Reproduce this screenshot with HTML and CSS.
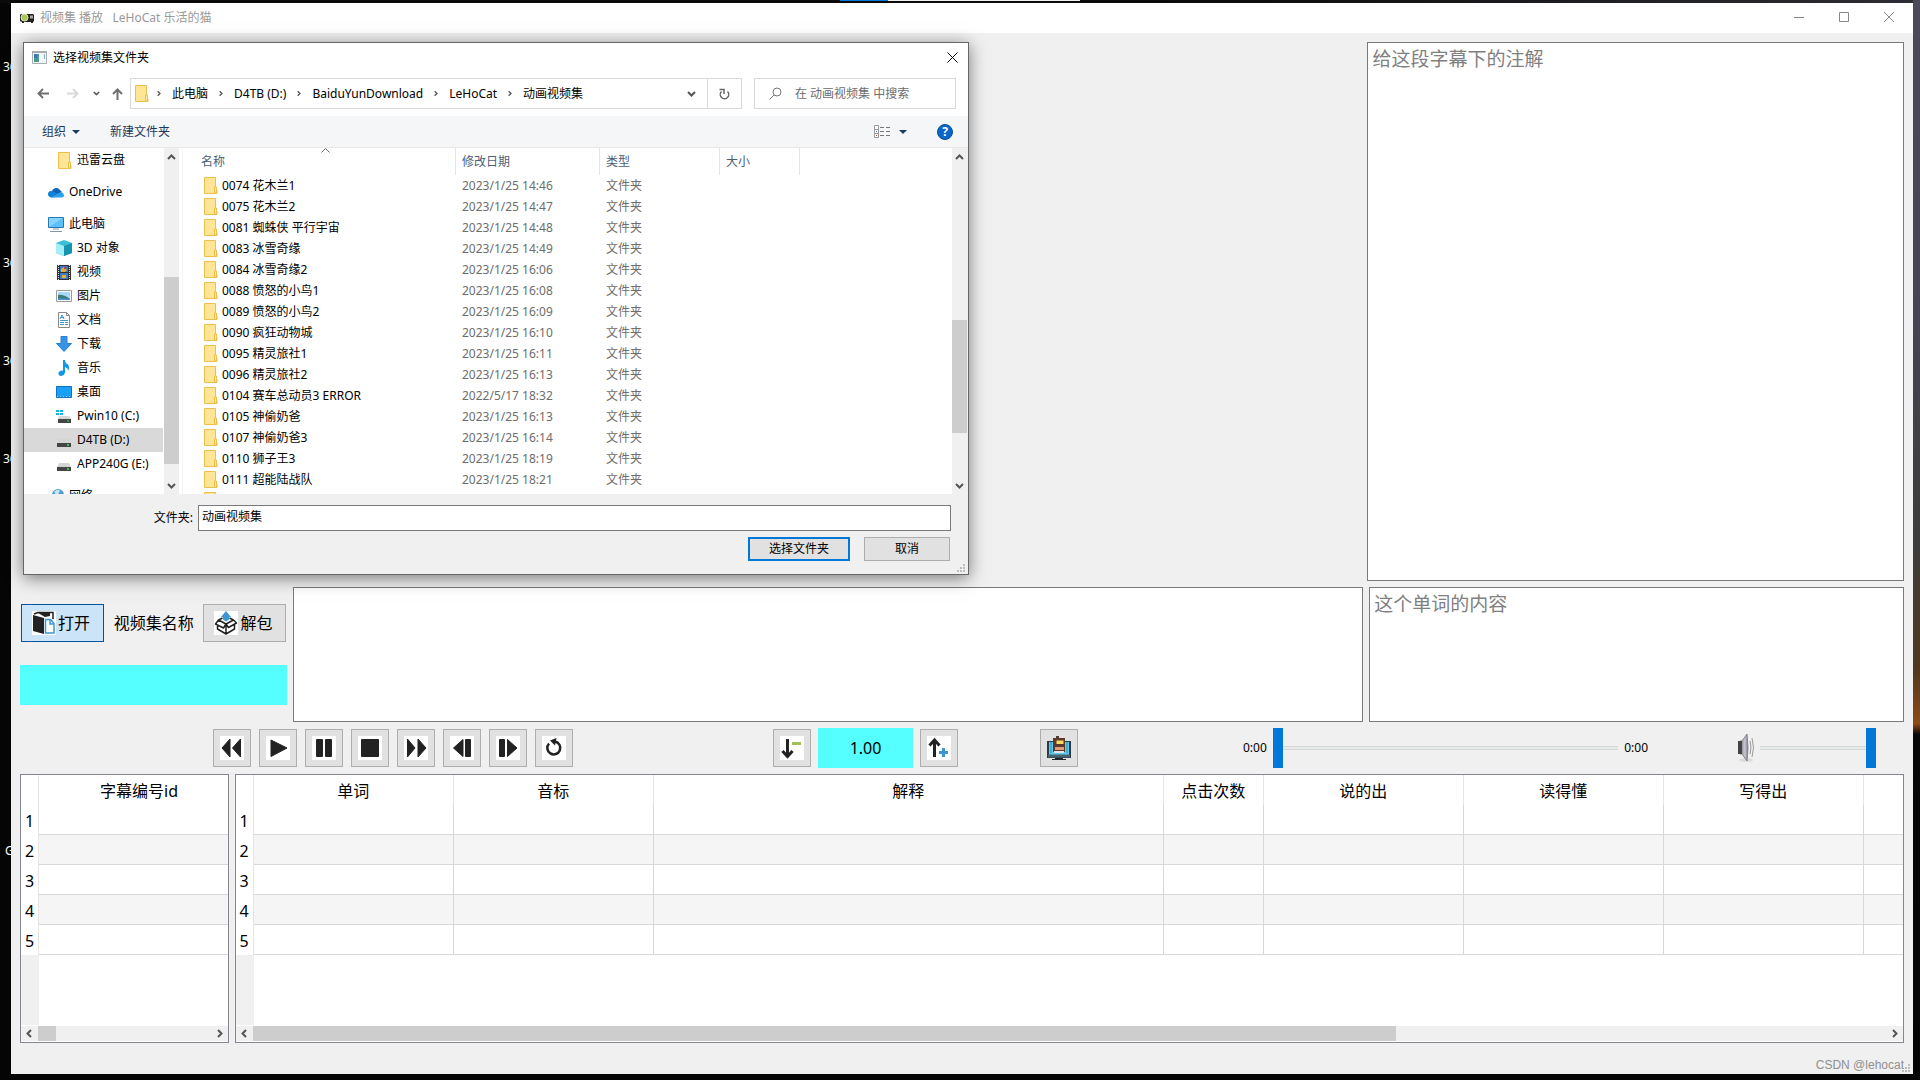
FILE: index.html
```html
<!DOCTYPE html>
<html lang="zh-CN">
<head>
<meta charset="utf-8">
<title>视频集 播放 LeHoCat 乐活的猫</title>
<link rel="stylesheet" href="styles.css">
</head>
<body>
<svg class="defs" aria-hidden="true">
  <symbol id="folder" viewBox="0 0 14 17">
    <path d="M.5.5h11v13h1.5v3H.5z" fill="#ffe595" stroke="#ecc04a"/>
    <path d="M10.500 16v-6h2v6z" fill="#ffe9a3" stroke="#ecc04a"/>
  </symbol>
  <symbol id="drive" viewBox="0 0 16 16">
    <path d="M3 7h10l2 4H1z" fill="#d5d5d5"/>
    <path d="M1 11h14v4H1z" fill="#454545"/>
    <path d="M11 13h2" stroke="#4be04b" stroke-width="1.500"/>
  </symbol>
  <symbol id="up" viewBox="0 0 9 6"><path d="M1 5l3.500-3.500L8 5" fill="none" stroke="#555" stroke-width="2"/></symbol>
  <symbol id="down" viewBox="0 0 9 6"><path d="M1 1l3.500 3.500L8 1" fill="none" stroke="#555" stroke-width="2"/></symbol>
  <symbol id="left" viewBox="0 0 6 9"><path d="M5 1L1.500 4.500 5 8" fill="none" stroke="#555" stroke-width="2"/></symbol>
  <symbol id="right" viewBox="0 0 6 9"><path d="M1 1l3.500 3.500L1 8" fill="none" stroke="#555" stroke-width="2"/></symbol>
  <symbol id="grip" viewBox="0 0 8 8"><path d="M6 0h2v2H6zM3 3h2v2H3zM6 3h2v2H6zM0 6h2v2H0zM3 6h2v2H3zM6 6h2v2H6z" fill="#bdbdbd"/></symbol>
</svg>

<div class="desktop">
  <span class="taskbar-edge"></span>
  <span class="desk-label one">36</span>
  <span class="desk-label two">36</span>
  <span class="desk-label three">36</span>
  <span class="desk-label four">36</span>
  <span class="desk-label five">G</span>

  <div class="window">
    <header class="titlebar">
      <svg width="14" height="10" viewBox="0 0 14 10"><path d="M0 1.500L2 1h11l1 1v6l-1 1v1h-2V9H4v1H2V9L0 8z" fill="#222"/><circle cx="4.500" cy="4.500" r="3.500" fill="#a6c957" stroke="#dfe6c9"/><path d="M10 2.500h3v3h-3z" fill="#aaa"/></svg>
      <h1>视频集 播放&nbsp;&nbsp; LeHoCat 乐活的猫</h1>
      <div class="window-buttons">
        <button aria-label="最小化"><svg width="10" height="10"><path d="M0 5.500h10" stroke="#888"/></svg></button>
        <button aria-label="最大化"><svg width="10" height="10"><path d="M.5.5h9v9h-9z" fill="none" stroke="#888"/></svg></button>
        <button aria-label="关闭"><svg width="10" height="10"><path d="M0 0l10 10M10 0L0 10" stroke="#888"/></svg></button>
      </div>
    </header>

    <main>
      <section class="upper">
        <textarea class="note" aria-label="注解" placeholder="给这段字幕下的注解"></textarea>
      </section>

      <section class="middle">
        <div class="package">
          <div class="package-row">
            <button class="push push-text active">
              <svg width="24" height="24" viewBox="0 0 24 24"><path fill="#fff" d="M0 0h24v24H0z"/><path d="M1 4l11 3v16L1 20z" fill="#222"/><path d="M2 3l4-1.500h15V8" fill="none" stroke="#222" stroke-width="1.500"/><path d="M6 2h12v3l-5 1z" fill="#222"/><path d="M13.500 8.500h5l3.500 4v9.500h-8.500z" fill="#fff" stroke="#3b97d3" stroke-width="1.500"/><path d="M18 9v4h4" fill="none" stroke="#3b97d3" stroke-width="1.500"/></svg>打开</button>
            <span>视频集名称</span>
            <button class="push push-text">
              <svg width="24" height="24" viewBox="0 0 24 24"><path fill="#fff" d="M0 0h24v24H0z"/><path d="M3.500 13.500V18l8.500 5 8.500-5v-4.500M12 13.500V23M4.500 9L12 13l-2.500 4L1.500 13zM19.500 9L12 13l2.500 3.500 8-4.500zM4.500 9l4-2M19.500 9l-4-2" fill="none" stroke="#222" stroke-width="1.500" stroke-linejoin="round"/><path d="M12 0l5 6h-2v2.500l-3 2-3-2V6H7z" fill="#3b97d3"/></svg>解包</button>
          </div>
          <output class="package-name"></output>
        </div>
        <textarea aria-label="字幕"></textarea>
        <textarea aria-label="单词内容" placeholder="这个单词的内容"></textarea>
      </section>

      <section class="controls">
        <div class="playback">
          <button class="push" aria-label="快退"><svg width="24" height="24" viewBox="0 0 24 24"><path fill="#fff" d="M0 0h24v24H0z"/><path d="M10 3v18L2 12zM20.500 3v18L12.500 12z" fill="#222" stroke="#222" stroke-linejoin="round"/></svg></button>
          <button class="push" aria-label="播放"><svg width="24" height="24" viewBox="0 0 24 24"><path fill="#fff" d="M0 0h24v24H0z"/><path d="M5 4l16 8-16 8.500z" fill="#222" stroke="#222" stroke-linejoin="round"/></svg></button>
          <button class="push" aria-label="暂停"><svg width="24" height="24" viewBox="0 0 24 24"><path fill="#fff" d="M0 0h24v24H0z"/><rect x="4" y="3" width="7" height="18" rx="1" fill="#222"/><rect x="13" y="3" width="7" height="18" rx="1" fill="#222"/></svg></button>
          <button class="push" aria-label="停止"><svg width="24" height="24" viewBox="0 0 24 24"><path fill="#fff" d="M0 0h24v24H0z"/><rect x="3" y="3" width="18" height="18" rx="1" fill="#222"/></svg></button>
          <button class="push" aria-label="快进"><svg width="24" height="24" viewBox="0 0 24 24"><path fill="#fff" d="M0 0h24v24H0z"/><path d="M3.500 3v18L11 12zM14 3v18L22 12z" fill="#222" stroke="#222" stroke-linejoin="round"/></svg></button>
          <button class="push" aria-label="上一句"><svg width="24" height="24" viewBox="0 0 24 24"><path fill="#fff" d="M0 0h24v24H0z"/><path d="M13 3.500v17L3.500 12z" fill="#222" stroke="#222" stroke-linejoin="round"/><rect x="15" y="3" width="6" height="18" rx="1" fill="#222"/></svg></button>
          <button class="push" aria-label="下一句"><svg width="24" height="24" viewBox="0 0 24 24"><path fill="#fff" d="M0 0h24v24H0z"/><path d="M11.500 3.500v17L21 12z" fill="#222" stroke="#222" stroke-linejoin="round"/><rect x="3" y="3" width="6" height="18" rx="1" fill="#222"/></svg></button>
          <button class="push" aria-label="重播"><svg width="24" height="24" viewBox="0 0 24 24"><path fill="#fff" d="M0 0h24v24H0z"/><path d="M7 7.500a6.500 6.500 0 1 0 6-2" fill="none" stroke="#222" stroke-width="2.500"/><path d="M14.500 2L8 4.500l5 5z" fill="#222"/></svg></button>
        </div>
        <div class="speed">
          <button class="push" aria-label="减速"><svg width="24" height="24" viewBox="0 0 24 24"><path fill="#fff" d="M0 0h24v24H0z"/><path d="M7.500 3v18M2.500 15l5 5.500 5-5.500" fill="none" stroke="#222" stroke-width="3"/><path d="M12 6h9v3h-9z" fill="#a2c058"/></svg></button>
          <output>1.00</output>
          <button class="push" aria-label="加速"><svg width="24" height="24" viewBox="0 0 24 24"><path fill="#fff" d="M0 0h24v24H0z"/><path d="M7.500 21V4M2.500 9.500l5-5.500 5 5.500" fill="none" stroke="#222" stroke-width="3"/><path d="M12 16.500h9M16.500 12v9" stroke="#3b97d3" stroke-width="3"/></svg></button>
        </div>
        <button class="push screen" aria-label="投屏"><svg width="24" height="24" viewBox="0 0 24 24"><path d="M0 5h24v17H0z" fill="#2b3a44"/><path d="M2 6h20v13H2z" fill="#5fc9ee"/><path d="M4 6v11M20 6v11" stroke="#238fae"/><path d="M1 18.500h22v3H1z" fill="#47626e"/><path d="M6 2h3V0h3v2h6v14H6z" fill="#5a3a2c"/><path d="M9.500 4.500h7v3.500h-7z" fill="#ffd75a"/><path d="M8 11h9v3H8z" fill="#e89a78"/><path d="M7 15h10v2H7z" fill="#dce4e8"/><path d="M8 22h8v1H8zM5 23h14v1H5z" fill="#20272c"/></svg></button>
        <div class="seek">
          <label for="position">0:00</label>
          <input id="position" type="range" min="0" max="100" value="0">
          <span>0:00</span>
        </div>
        <div class="volume">
          <svg width="16" height="30" viewBox="0 0 16 30"><defs><linearGradient id="cone"><stop offset="0" stop-color="#77777c"/><stop offset=".6" stop-color="#c9c9d6"/><stop offset="1" stop-color="#7d7d84"/></linearGradient></defs><ellipse cx="8" cy="27" rx="7" ry="2" fill="#dcdcdc"/><path d="M2 8h2l5-7q2 14 0 27l-5-7H2z" fill="url(#cone)" stroke="#85858c"/><path d="M0 8h4v13H0z" fill="#444"/><path d="M12 8q2 6 0 13M14 5q3 10 0 19" fill="none" stroke="#999"/></svg>
          <input type="range" aria-label="音量" min="0" max="100" value="100">
        </div>
      </section>

      <section class="tables">
        <div class="grid-box">
          <table class="grid subtitles">
            <colgroup><col class="c-num"><col class="c-200"></colgroup>
            <thead><tr><td></td><th scope="col">字幕编号id</th></tr></thead>
            <tbody>
              <tr><th scope="row">1</th><td></td></tr>
              <tr><th scope="row">2</th><td></td></tr>
              <tr><th scope="row">3</th><td></td></tr>
              <tr><th scope="row">4</th><td></td></tr>
              <tr><th scope="row">5</th><td></td></tr>
            </tbody>
          </table>
          <div class="grid-rest"></div>
          <div class="hbar"><svg width="6" height="9"><use href="#left"/></svg><div class="track"><i class="thumb short"></i></div><svg width="6" height="9"><use href="#right"/></svg></div>
        </div>
        <div class="grid-box">
          <table class="grid words">
            <colgroup><col class="c-num"><col class="c-200"><col class="c-200"><col class="c-510"><col class="c-100"><col class="c-200"><col class="c-200"><col class="c-200"><col class="c-200"></colgroup>
            <thead><tr><td></td><th scope="col">单词</th><th scope="col">音标</th><th scope="col">解释</th><th scope="col">点击次数</th><th scope="col">说的出</th><th scope="col">读得懂</th><th scope="col">写得出</th><td></td></tr></thead>
            <tbody>
              <tr><th scope="row">1</th><td></td><td></td><td></td><td></td><td></td><td></td><td></td><td></td></tr>
              <tr><th scope="row">2</th><td></td><td></td><td></td><td></td><td></td><td></td><td></td><td></td></tr>
              <tr><th scope="row">3</th><td></td><td></td><td></td><td></td><td></td><td></td><td></td><td></td></tr>
              <tr><th scope="row">4</th><td></td><td></td><td></td><td></td><td></td><td></td><td></td><td></td></tr>
              <tr><th scope="row">5</th><td></td><td></td><td></td><td></td><td></td><td></td><td></td><td></td></tr>
            </tbody>
          </table>
          <div class="grid-rest"></div>
          <div class="hbar"><svg width="6" height="9"><use href="#left"/></svg><div class="track"><i class="thumb long"></i></div><svg width="6" height="9"><use href="#right"/></svg></div>
        </div>
      </section>
    </main>

    <footer class="status"><span>CSDN @lehocat</span><svg width="8" height="8"><use href="#grip"/></svg></footer>

    <div class="dialog" role="dialog" aria-label="选择视频集文件夹">
      <div class="dialog-title">
        <svg width="15" height="13" viewBox="0 0 15 13"><path d="M.5.5h14v12H.5z" fill="#f4f6f8" stroke="#a3adb5"/><path d="M0 0h15v2H0z" fill="#a3adb5"/><path d="M2 3h5v8H2z" fill="#4a9a8c"/><path d="M2 3h3v4H2z" fill="#3e78b0"/><path d="M12 3h1v5h-1z" fill="#7fb3c8"/></svg>
        <h2>选择视频集文件夹</h2>
        <button aria-label="关闭"><svg width="11" height="11"><path d="M.5.5l10 10M10.500.5l-10 10" stroke="#000"/></svg></button>
      </div>

      <nav class="address">
        <button aria-label="后退"><svg width="12" height="11" viewBox="0 0 12 11"><path d="M12 5.500H1.500M6 1L1.500 5.500 6 10" fill="none" stroke="#707070" stroke-width="2"/></svg></button>
        <button aria-label="前进"><svg width="12" height="11" viewBox="0 0 12 11"><path d="M0 5.500h10.500M6 1l4.500 4.500L6 10" fill="none" stroke="#d9d9d9" stroke-width="2"/></svg></button>
        <button class="recent" aria-label="最近"><svg width="7" height="5" viewBox="0 0 9 6"><use href="#down"/></svg></button>
        <button class="go-up" aria-label="上移"><svg width="11" height="12" viewBox="0 0 11 12"><path d="M5.500 12V1.500M1 6l4.500-4.500L10 6" fill="none" stroke="#707070" stroke-width="2"/></svg></button>
        <div class="crumbs">
          <svg width="14" height="17"><use href="#folder"/></svg>
          <svg class="sep" width="4" height="7" viewBox="0 0 6 9"><use href="#right"/></svg><a href="#">此电脑</a>
          <svg class="sep" width="4" height="7" viewBox="0 0 6 9"><use href="#right"/></svg><a href="#">D4TB (D:)</a>
          <svg class="sep" width="4" height="7" viewBox="0 0 6 9"><use href="#right"/></svg><a href="#">BaiduYunDownload</a>
          <svg class="sep" width="4" height="7" viewBox="0 0 6 9"><use href="#right"/></svg><a href="#">LeHoCat</a>
          <svg class="sep" width="4" height="7" viewBox="0 0 6 9"><use href="#right"/></svg><a href="#">动画视频集</a>
          <button class="history" aria-label="历史"><svg width="9" height="6"><use href="#down"/></svg></button>
          <button class="refresh" aria-label="刷新"><svg width="11" height="12" viewBox="0 0 11 12"><path d="M2.500 3.500a4.200 4.200 0 1 0 6 0" fill="none" stroke="#666" stroke-width="1.500"/><path d="M1 1.500h4.500V6" fill="none" stroke="#666" stroke-width="1.500" transform="translate(-.5 0)"/></svg></button>
        </div>
        <div class="search">
          <svg width="13" height="13" viewBox="0 0 13 13"><circle cx="8" cy="5" r="4" fill="none" stroke="#777"/><path d="M5 8L.5 12.500" stroke="#777"/></svg>
          <input type="text" aria-label="搜索" placeholder="在 动画视频集 中搜索">
        </div>
      </nav>

      <div class="toolbar">
        <button>组织 <svg width="8" height="4"><path d="M0 0h8L4 4z" fill="#1b3a66"/></svg></button>
        <button>新建文件夹</button>
        <button class="view" aria-label="视图"><svg width="17" height="13" viewBox="0 0 17 13"><path d="M.5.5h4v12h-4zM.5 4.500h4M.5 8.500h4" fill="#fff" stroke="#999"/><path d="M6 2.500h4M12 2.500h4M6 6.500h4M12 6.500h4M6 10.500h4M12 10.500h4" stroke="#777"/><path d="M2 6h1v1H2z" fill="#3b78c0"/><path d="M2 10h1v1H2z" fill="#d33"/></svg><svg width="8" height="4"><path d="M0 0h8L4 4z" fill="#1b3a66"/></svg></button>
        <button class="help" aria-label="帮助">?</button>
      </div>

      <div class="browser">
        <ul class="tree">
          <li class="sub last"><svg width="14" height="17"><use href="#folder"/></svg>迅雷云盘</li>
          <li class="last"><svg width="16" height="16" viewBox="0 0 16 16"><path d="M4 7a4.500 4.500 0 0 1 8-1l2 2-8 5H3z" fill="#0a64b8"/><path d="M3 13.500A3.200 3.200 0 0 1 3.500 7q2 0 4 1.500l6 4z" fill="#1280d8"/><path d="M3 13.500L10.500 9Q15 7 16 11q0 2.500-2.500 2.500z" fill="#28a0ea"/></svg>OneDrive</li>
          <li><svg width="16" height="16" viewBox="0 0 16 16"><path d="M.5 1.500h15v10H.5z" fill="#5cc0fa" stroke="#2b78b0"/><path d="M1 2h14L1 11z" fill="#86d4ff"/><path d="M5 13h6M2 15.500h12" stroke="#8597a3"/></svg>此电脑</li>
          <li class="sub"><svg width="16" height="16" viewBox="0 0 16 16"><path d="M8 0l8 3v10l-8 3-8-3V3z" fill="#3cc0d8"/><path d="M0 3l8 3v10l-8-3z" fill="#a5eef5"/><path d="M8 6l8-3v10l-8 3z" fill="#1594ae"/></svg>3D 对象</li>
          <li class="sub"><svg width="16" height="16" viewBox="0 0 16 16"><path d="M1 1h14v15H1z" fill="#333"/><path d="M2.500 1v15M13.500 1v15" stroke="#ddd" stroke-dasharray="1 1"/><path d="M4 2h8v6H4zM4 9h8v6H4z" fill="#4377c8"/><path d="M5 5l3-2 3 3-2 2H5zM6 11h4v3H6z" fill="#d9b23a"/><path d="M8 3h2v2H8z" fill="#c34"/></svg>视频</li>
          <li class="sub"><svg width="16" height="16" viewBox="0 0 16 16"><path d="M.5 2.500h15v11H.5z" fill="#fff" stroke="#999"/><path d="M2 4h12v8H2z" fill="#a9d7f7"/><path d="M2 7q5-1 12 4v1H2z" fill="#3c7c74"/><path d="M2 10l12 1v1H2z" fill="#4a90c8"/></svg>图片</li>
          <li class="sub"><svg width="16" height="16" viewBox="0 0 16 16"><path d="M2.500.5h8l3 3v12h-11z" fill="#fff" stroke="#888"/><path d="M10.500.5v3h3" fill="none" stroke="#888"/><path d="M4 7l2-4 2 4M5 5.500h3M4 8.500h8M4 10.500h4M9 10.500h3M4 12.500h4M9 12.500h3" fill="none" stroke="#3b9ad0"/></svg>文档</li>
          <li class="sub"><svg width="16" height="16" viewBox="0 0 16 16"><path d="M5 .5h6v7h4.500L8 15.500.5 7.500H5z" fill="#3794e4" stroke="#2a7fd0"/></svg>下载</li>
          <li class="sub"><svg width="16" height="16" viewBox="0 0 16 16"><path d="M7 0h2q0 3 3 4.500 2 3 0 6.500 0-3-3-4v5.500Q8 16 4.500 16 2 15 2.500 12.500 4 10 7 10.500z" fill="#1296e8"/></svg>音乐</li>
          <li class="sub"><svg width="16" height="16" viewBox="0 0 16 16"><path d="M.5 2.500h15v11H.5z" fill="#1ba0fa" stroke="#0e70c0"/><path d="M1 12.500h14" stroke="#8fd0ff" stroke-dasharray="1 2"/></svg>桌面</li>
          <li class="sub"><svg width="16" height="16" viewBox="0 0 16 16"><path d="M3 8h10l2 3H2z" fill="#d5d5d5"/><path d="M2 11h13v4H2z" fill="#454545"/><path d="M11 13h2" stroke="#4be04b"/><path d="M0 2h3v2H0zM4 2h3v2H4zM0 5h3v2H0zM4 5h3v2H4z" fill="#12b4f0"/></svg>Pwin10 (C:)</li>
          <li class="sub selected"><svg width="16" height="16"><use href="#drive"/></svg>D4TB (D:)</li>
          <li class="sub last"><svg width="16" height="16"><use href="#drive"/></svg>APP240G (E:)</li>
          <li><svg width="16" height="16" viewBox="0 0 16 16"><circle cx="10" cy="7" r="6" fill="#4a9ccc"/><path d="M6 4q4-4 6-1l-3 5z" fill="#c4e6f4"/></svg>网络</li>
        </ul>
        <div class="vbar"><svg width="9" height="6"><use href="#up"/></svg><i class="thumb tree-thumb"></i><svg width="9" height="6"><use href="#down"/></svg></div>
        <div class="files">
          <table>
            <colgroup><col class="f-name"><col class="f-date"><col class="f-type"><col class="f-size"><col></colgroup>
            <thead><tr><th scope="col">名称<svg class="sort" width="9" height="5"><path d="M.5 4.500l4-4 4 4" fill="none" stroke="#666"/></svg></th><th scope="col">修改日期</th><th scope="col">类型</th><th scope="col">大小</th><td></td></tr></thead>
            <tbody>
              <tr><td><svg width="14" height="17"><use href="#folder"/></svg><span>0074 花木兰1</span></td><td>2023/1/25 14:46</td><td>文件夹</td></tr>
              <tr><td><svg width="14" height="17"><use href="#folder"/></svg><span>0075 花木兰2</span></td><td>2023/1/25 14:47</td><td>文件夹</td></tr>
              <tr><td><svg width="14" height="17"><use href="#folder"/></svg><span>0081 蜘蛛侠 平行宇宙</span></td><td>2023/1/25 14:48</td><td>文件夹</td></tr>
              <tr><td><svg width="14" height="17"><use href="#folder"/></svg><span>0083 冰雪奇缘</span></td><td>2023/1/25 14:49</td><td>文件夹</td></tr>
              <tr><td><svg width="14" height="17"><use href="#folder"/></svg><span>0084 冰雪奇缘2</span></td><td>2023/1/25 16:06</td><td>文件夹</td></tr>
              <tr><td><svg width="14" height="17"><use href="#folder"/></svg><span>0088 愤怒的小鸟1</span></td><td>2023/1/25 16:08</td><td>文件夹</td></tr>
              <tr><td><svg width="14" height="17"><use href="#folder"/></svg><span>0089 愤怒的小鸟2</span></td><td>2023/1/25 16:09</td><td>文件夹</td></tr>
              <tr><td><svg width="14" height="17"><use href="#folder"/></svg><span>0090 疯狂动物城</span></td><td>2023/1/25 16:10</td><td>文件夹</td></tr>
              <tr><td><svg width="14" height="17"><use href="#folder"/></svg><span>0095 精灵旅社1</span></td><td>2023/1/25 16:11</td><td>文件夹</td></tr>
              <tr><td><svg width="14" height="17"><use href="#folder"/></svg><span>0096 精灵旅社2</span></td><td>2023/1/25 16:13</td><td>文件夹</td></tr>
              <tr><td><svg width="14" height="17"><use href="#folder"/></svg><span>0104 赛车总动员3 ERROR</span></td><td>2022/5/17 18:32</td><td>文件夹</td></tr>
              <tr><td><svg width="14" height="17"><use href="#folder"/></svg><span>0105 神偷奶爸</span></td><td>2023/1/25 16:13</td><td>文件夹</td></tr>
              <tr><td><svg width="14" height="17"><use href="#folder"/></svg><span>0107 神偷奶爸3</span></td><td>2023/1/25 16:14</td><td>文件夹</td></tr>
              <tr><td><svg width="14" height="17"><use href="#folder"/></svg><span>0110 狮子王3</span></td><td>2023/1/25 18:19</td><td>文件夹</td></tr>
              <tr><td><svg width="14" height="17"><use href="#folder"/></svg><span>0111 超能陆战队</span></td><td>2023/1/25 18:21</td><td>文件夹</td></tr>
              <tr><td><svg width="14" height="17"><use href="#folder"/></svg></td><td></td><td></td></tr>
            </tbody>
          </table>
        </div>
        <div class="vbar"><svg width="9" height="6"><use href="#up"/></svg><i class="thumb files-thumb"></i><svg width="9" height="6"><use href="#down"/></svg></div>
      </div>

      <form class="choose">
        <label for="folder-name">文件夹:</label>
        <input id="folder-name" type="text" value="动画视频集">
        <div class="choose-buttons">
          <button type="button" class="default">选择文件夹</button>
          <button type="button">取消</button>
        </div>
      </form>
      <svg class="dialog-grip" width="8" height="8"><use href="#grip"/></svg>
    </div>
  </div>
</div>
</body>
</html>
```

FILE: styles.css
```css
* { box-sizing: border-box; }

body {
  margin: 0;
  font: 12px/16px "Noto Sans", "Noto Sans CJK SC", sans-serif;
  color: #000;
}

button, input, textarea { font: inherit; color: inherit; margin: 0; }
button { padding: 0; border: 0; background: none; }
svg { display: block; flex: none; }
h1, h2 { margin: 0; font-size: 12px; font-weight: 400; }
a { color: inherit; text-decoration: none; }
.defs { position: absolute; width: 0; height: 0; }

.desktop {
  position: relative;
  display: flex;
  min-height: 100vh;
  padding: 3px 7px 6px 11px;
  overflow: hidden;
  background:
    linear-gradient(#4b4a5a, #454450 30%, #3c3c3c 50%, #50381f 62%, #8d4a15 67%, #0a0806 68%, #050505) right / 7px 100% no-repeat,
    linear-gradient(90deg, #0a0a0a 60%, #2d2d35) top / 100% 3px no-repeat,
    #050505;
}

.taskbar-edge {
  position: absolute;
  left: 840px;
  top: 0;
  width: 240px;
  height: 1px;
  background: linear-gradient(90deg, #0078d7 20%, #f0f0f0 20%);
}

.desk-label { position: absolute; left: 3px; color: #fff; }
.one { top: 59px; }
.two { top: 255px; }
.three { top: 353px; }
.four { top: 451px; }
.five { top: 843px; left: 5px; }

/* Player window */
.window {
  position: relative;
  flex: 1;
  min-width: 0;
  display: flex;
  flex-direction: column;
  background: #f0f0f0;
}

.titlebar {
  display: flex;
  align-items: center;
  gap: 6px;
  height: 30px;
  padding: 0 19px 0 9px;
  background: #fff;
  color: #999;
}

.window-buttons { display: flex; gap: 35px; margin-left: auto; }
.window-buttons svg { margin-bottom: 2px; }

main {
  flex: 1;
  display: flex;
  flex-direction: column;
  gap: 6px;
  padding: 9px 9px 0;
}

textarea {
  display: block;
  width: 100%;
  height: 100%;
  padding: 3px 4px;
  border: 1px solid #7a7a7a;
  border-radius: 0;
  background: #fff;
  font-size: 19px;
  line-height: 26px;
  resize: none;
}

textarea::placeholder { color: #808080; }

.upper { flex: 1; display: grid; grid-template-columns: 5fr 2fr; gap: 6px; }
.note { grid-column: 2; }
.middle { display: grid; grid-template-columns: 1fr 4fr 2fr; gap: 6px; height: 135px; }

.package { display: flex; flex-direction: column; gap: 23px; padding-top: 17px; }
.package-row { display: flex; align-items: center; justify-content: space-between; padding: 0 1px; font-size: 16px; }
.package-name { display: block; height: 40px; background: #5ff; }

.push {
  display: flex;
  align-items: center;
  justify-content: center;
  width: 38px;
  height: 38px;
  border: 1px solid #adadad;
  background: #e1e1e1;
}

.push-text { justify-content: flex-start; gap: 2px; width: 83px; padding-left: 10px; }
.push.active { border-color: #005499; background: #cce4f7; }

.controls {
  display: grid;
  grid-template-columns: 193fr 360px 200fr 185px 82fr 38px 165fr 405px 90fr 138px 28fr;
  align-items: center;
  height: 40px;
}

.playback { grid-column: 2; display: flex; gap: 8px; }
.speed { grid-column: 4; display: flex; align-items: center; justify-content: space-between; }
.speed output { width: 95px; background: #5ff; font-size: 16px; line-height: 40px; text-align: center; }
.screen { grid-column: 6; }
.seek { grid-column: 8; display: flex; align-items: center; gap: 6px; }
.volume { grid-column: 10; display: flex; align-items: center; gap: 6px; }

input[type="range"] {
  flex: 1;
  min-width: 0;
  height: 40px;
  appearance: none;
  background: none;
}

input[type="range"]::-webkit-slider-runnable-track { height: 40px; background: linear-gradient(#d6d6d6 1px, #e7eaea 1px 3px, #d6d6d6 3px) center / 100% 4px no-repeat; }
input[type="range"]::-webkit-slider-thumb { appearance: none; width: 10px; height: 40px; background: #0078d7; }

.tables { display: grid; grid-template-columns: 1fr 8fr; gap: 6px; }

.grid-box {
  display: flex;
  flex-direction: column;
  min-width: 0;
  height: 269px;
  border: 1px solid #828790;
  background: #fff;
  overflow: hidden;
}

.grid { border-collapse: separate; border-spacing: 0; table-layout: fixed; font-size: 16px; line-height: 20px; }
.subtitles { width: 218px; }
.words { width: 1828px; }
.c-num { width: 18px; }
.c-100 { width: 100px; }
.c-200 { width: 200px; }
.c-510 { width: 510px; }
.grid th, .grid td { height: 30px; padding: 2px 0 0; font-weight: 400; text-align: center; border-right: 1px solid #e5e5e5; }
.grid tbody td { border-right-color: #d8d8d8; border-bottom: 1px solid #d8d8d8; }
.grid tbody tr:nth-child(even) td { background: #f5f5f5; }
.subtitles th:last-child, .subtitles td:last-child { border-right: 0; }

.grid-rest { flex: 1; width: 18px; background: #f0f0f0; }

.hbar {
  display: flex;
  align-items: center;
  gap: 6px;
  height: 17px;
  padding: 0 5px;
  border: solid #fff;
  border-width: 1px 0;
  background: #f0f0f0;
}

.hbar .track { flex: 1; }
.thumb { display: block; background: #cdcdcd; }
.hbar .thumb { height: 15px; }
.short { width: 18px; }
.long { width: 70%; }

.status {
  display: flex;
  align-items: flex-end;
  justify-content: flex-end;
  height: 31px;
  padding: 0 3px 1px 0;
  color: #8f8f8f;
  font: 12px/16px "Liberation Sans", Arial, sans-serif;
}

.status svg { margin: 0 0 1px -2px; }

/* Folder picker floating over the player */
.dialog {
  position: absolute;
  left: 12px;
  top: 39px;
  width: 946px;
  border: 1px solid #666;
  background: #f0f0f0;
  box-shadow: 0 3px 16px rgba(0, 0, 0, .5);
}

.dialog-title { display: flex; align-items: center; gap: 6px; height: 31px; padding: 0 10px 2px 8px; background: #fff; }
.dialog-title button { margin-left: auto; }

.address { display: flex; align-items: center; height: 42px; padding: 0 12px 3px 13px; background: #fff; }
.address > button { width: 12px; margin-right: 18px; }
.address > .recent { width: 7px; margin-right: 12px; margin-left: -4px; }
.address > .go-up { width: 11px; margin-right: 7px; }

.crumbs { flex: 1; display: flex; align-items: center; gap: 11px; height: 31px; padding-left: 4px; border: 1px solid #d9d9d9; }
.crumbs > :first-child { margin-right: -3px; }
.crumbs a { white-space: nowrap; }
.history { margin-left: auto; }
.refresh { display: grid; place-items: center; width: 34px; height: 29px; border-left: 1px solid #d9d9d9; }

.search { display: flex; align-items: center; gap: 13px; width: 202px; height: 31px; margin-left: 12px; padding-left: 14px; border: 1px solid #d9d9d9; }
.search input { flex: 1; min-width: 0; padding: 0; border: 0; background: none; }
.search input::placeholder { color: #6d6d6d; }

.toolbar { display: flex; align-items: center; gap: 30px; height: 32px; padding: 0 15px 0 18px; border-bottom: 1px solid #e8e8e8; background: #f5f6f7; color: #1e395b; }
.toolbar button { display: flex; align-items: center; gap: 6px; }
.toolbar .view { gap: 8px; margin-left: auto; }
.toolbar .help { justify-content: center; width: 16px; height: 16px; border: 1px solid #0a4f96; border-radius: 50%; background: #0a66c8; color: #fff; font-weight: 700; }

.browser { display: flex; height: 346px; border-right: 1px solid #f0f0f0; background: #fff; overflow: hidden; }

.tree { width: 140px; margin: 0; padding: 0 1px 0 0; list-style: none; }
.tree li { display: flex; align-items: center; gap: 5px; height: 24px; padding-left: 24px; white-space: nowrap; }
.tree .sub { padding-left: 32px; }
.tree .sub:first-child { padding-left: 34px; }
.tree .last { margin-bottom: 8px; }
.tree .selected { background: #d9d9d9; }

.vbar { display: flex; flex-direction: column; align-items: center; width: 15px; padding: 6px 0 5px; background: #f0f0f0; }
.vbar .thumb { width: 15px; margin-bottom: auto; }
.tree-thumb { height: 187px; margin-top: 117px; }
.files-thumb { height: 113px; margin-top: 160px; }

.files { flex: 1; min-width: 0; margin-left: 3px; border-left: 1px solid #f3f3f3; }
.files table { width: 100%; border-collapse: separate; border-spacing: 0; table-layout: fixed; }
.f-name { width: 273px; }
.f-date { width: 144px; }
.f-type { width: 120px; }
.f-size { width: 80px; }
.files th { position: relative; height: 27px; padding: 0 0 0 6px; border-right: 1px solid #e5e5e5; color: #4c607a; font-weight: 400; text-align: left; }
.files th:first-child { padding-left: 18px; }
.sort { position: absolute; left: 138px; top: 0; }
.files td { height: 21px; padding: 0 0 0 6px; color: #6d6d6d; white-space: nowrap; }
.files td:first-child { padding-left: 21px; color: #000; }
.files td svg { display: inline-block; margin-right: 4px; vertical-align: middle; }
.files td span { display: inline-block; vertical-align: middle; }

.choose { display: grid; grid-template-columns: 169px 1fr; column-gap: 5px; row-gap: 6px; padding: 11px 17px 13px 0; }
.choose label { align-self: center; text-align: right; }
.choose input { height: 26px; padding: 0 3px 4px; border: 1px solid #7a7a7a; background: #fff; }
.choose-buttons { grid-column: 2; display: flex; justify-content: flex-end; gap: 14px; padding-right: 1px; }
.choose-buttons button { width: 86px; height: 24px; border: 1px solid #adadad; background: #e1e1e1; }
.choose-buttons .default { width: 102px; border: 2px solid #0078d7; }
.dialog-grip { position: absolute; right: 3px; bottom: 2px; }
```
